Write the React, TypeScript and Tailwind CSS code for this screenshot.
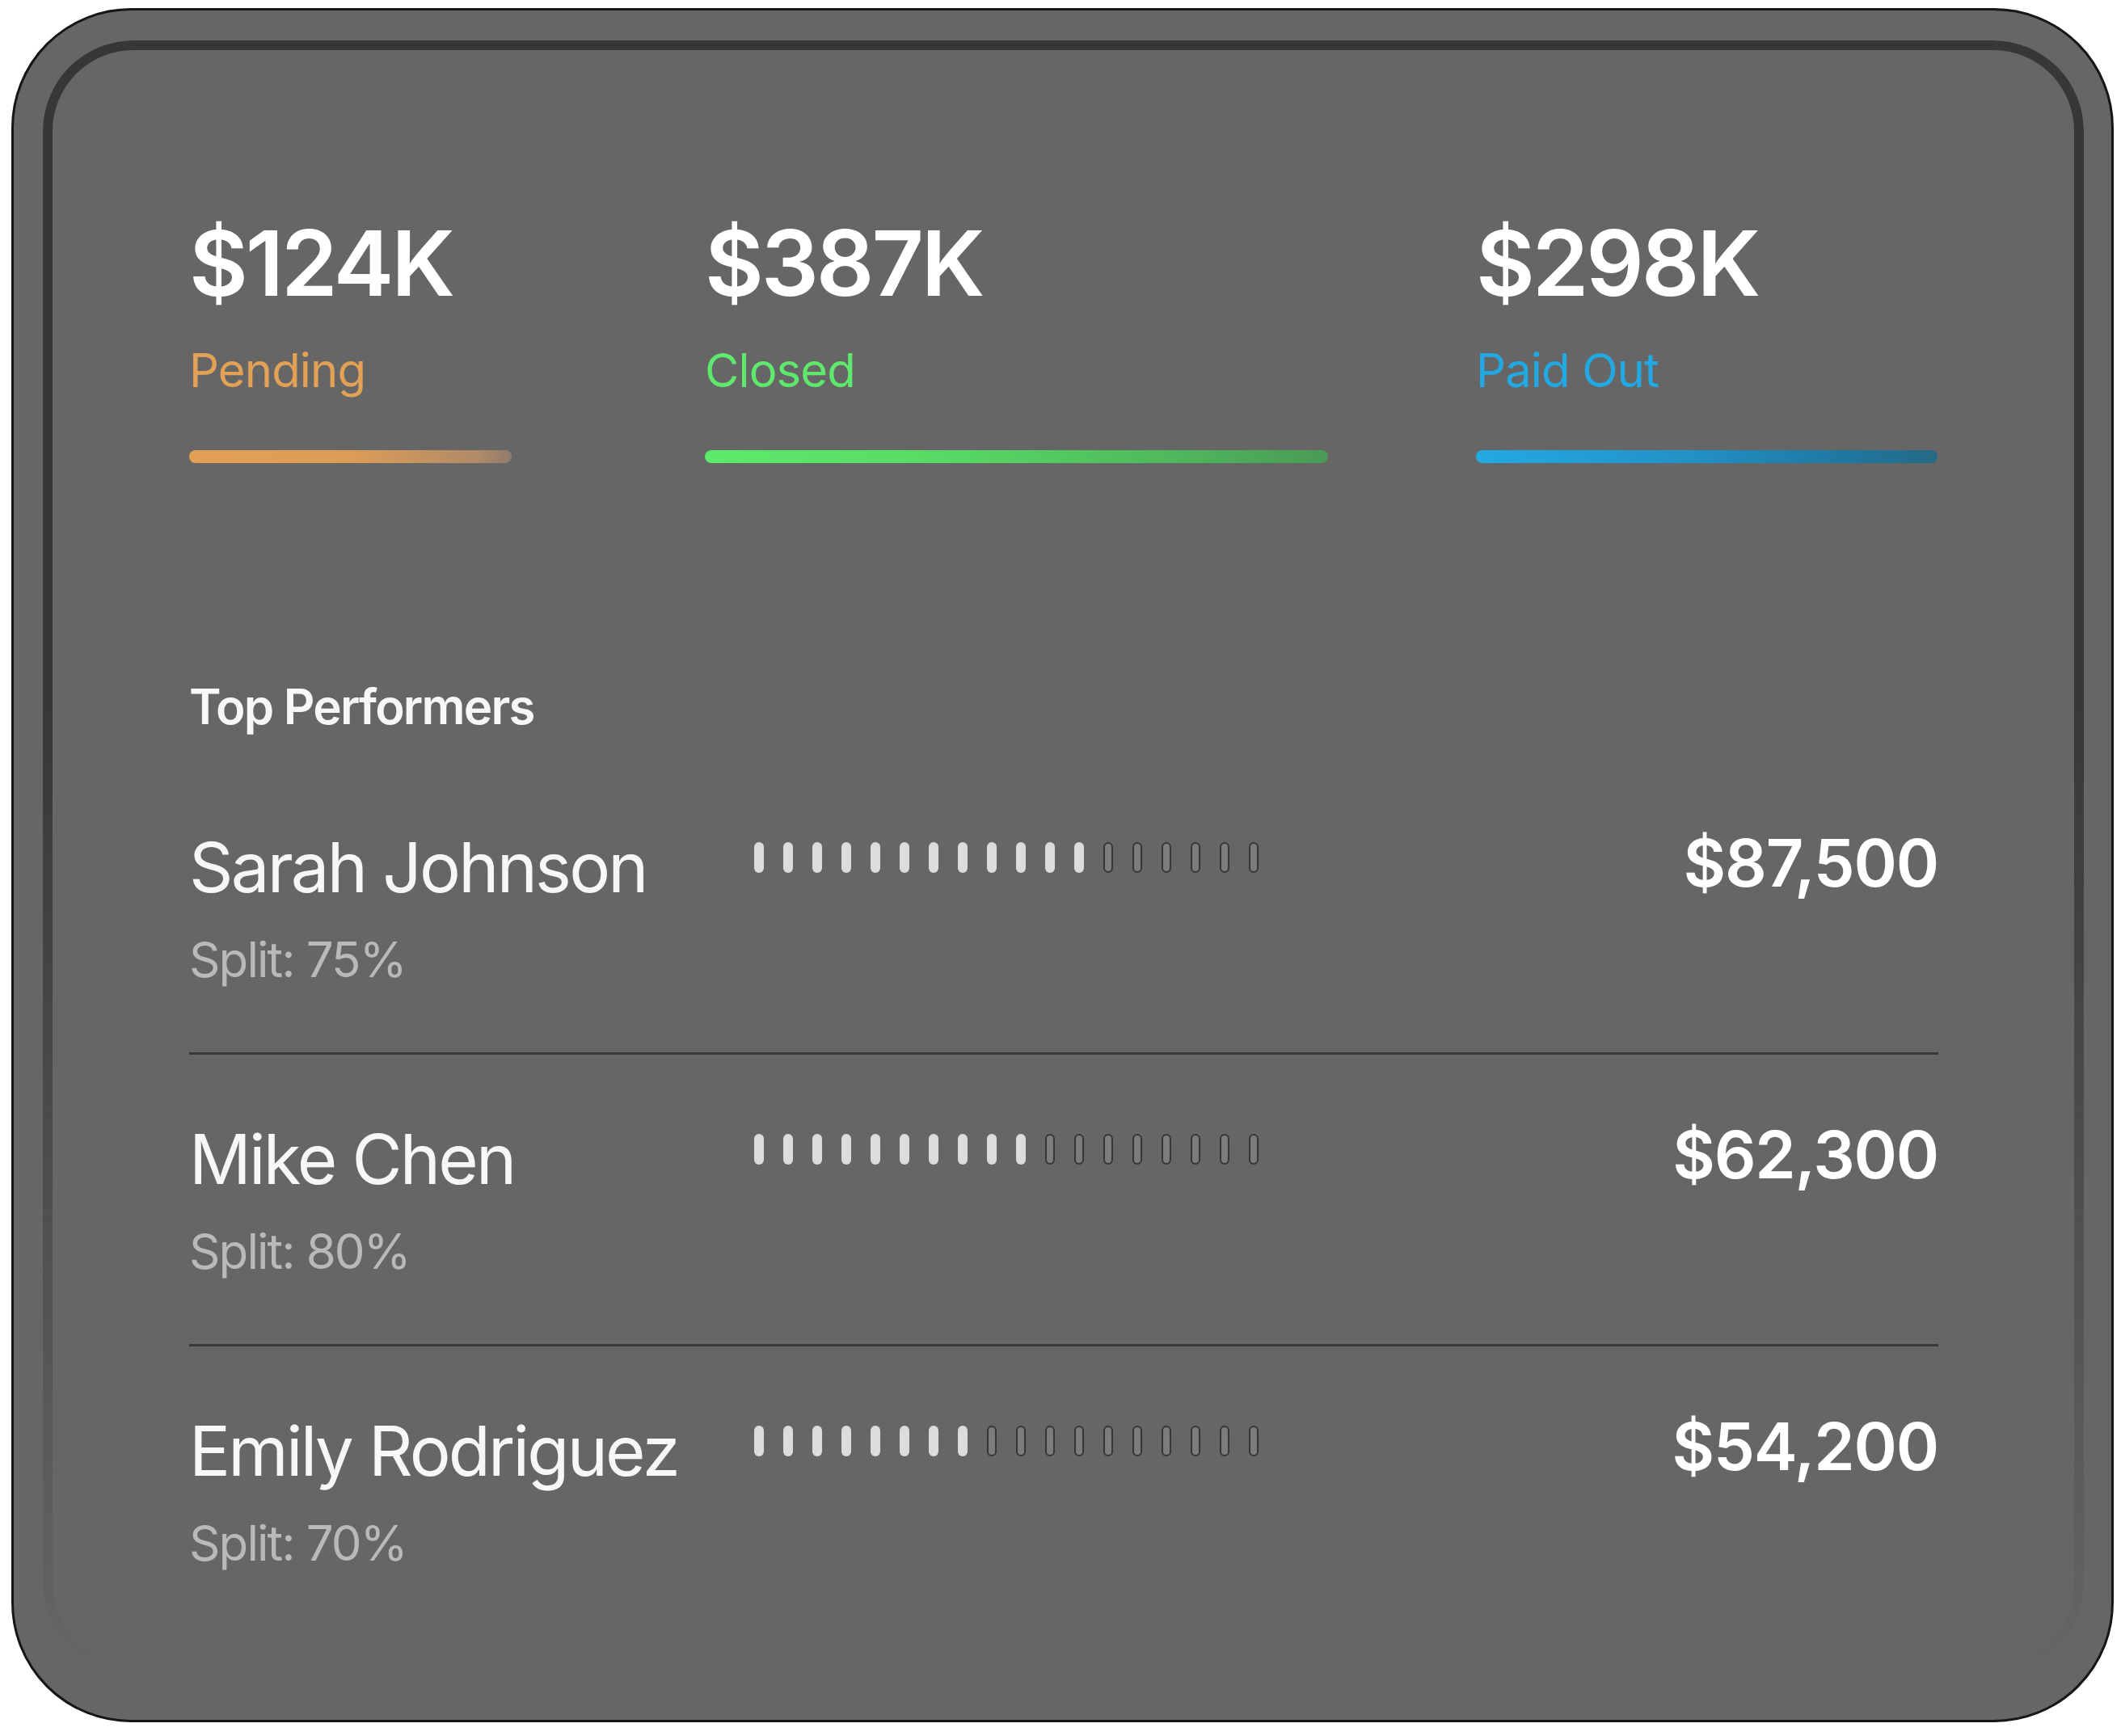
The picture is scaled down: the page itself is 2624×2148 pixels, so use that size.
import React from "react";

interface Stat {
  value: string;
  label: string;
  labelClass: string;
  barClass: string;
  colClass: string;
}

interface Performer {
  name: string;
  split: string;
  amount: string;
  filled: number;
}

const stats: Stat[] = [
  {
    value: "$124K",
    label: "Pending",
    labelClass: "text-[#e3a156]",
    barClass:
      "w-[399px] bg-[linear-gradient(to_right,#e2a055_0%,#dc9d57_50%,#b08a68_90%,#8e7b6d_100%)]",
    colClass: "w-[638px]",
  },
  {
    value: "$387K",
    label: "Closed",
    labelClass: "text-[#5fe96c]",
    barClass:
      "w-[771px] bg-[linear-gradient(to_right,#5de96b_0%,#58dc66_35%,#4fb85c_75%,#4a9a55_100%)]",
    colClass: "w-[954px]",
  },
  {
    value: "$298K",
    label: "Paid Out",
    labelClass: "text-[#22a9e3]",
    barClass:
      "w-full bg-[linear-gradient(to_right,#24a9e2_0%,#2292c7_45%,#1f77a0_80%,#256a86_100%)]",
    colClass: "w-[571px]",
  },
];

const performers: Performer[] = [
  { name: "Sarah Johnson", split: "Split: 75%", amount: "$87,500", filled: 12 },
  { name: "Mike Chen", split: "Split: 80%", amount: "$62,300", filled: 10 },
  { name: "Emily Rodriguez", split: "Split: 70%", amount: "$54,200", filled: 8 },
];

const TOTAL_TICKS = 18;

function Ticks({ filled }: { filled: number }) {
  return (
    <div className="mt-[18px] flex gap-[24px]">
      {Array.from({ length: TOTAL_TICKS }).map((_, i) =>
        i < filled ? (
          <div key={i} className="h-[38px] w-[12px] rounded-full bg-[#dcdcdc]" />
        ) : (
          <div
            key={i}
            className="h-[38px] w-[12px] rounded-full border-2 border-[#363636] bg-[#7c7c7c]"
          />
        )
      )}
    </div>
  );
}

export default function App() {
  return (
    <div
      className="min-h-screen bg-white pl-[14px] pt-[10px]"
      style={{ fontFamily: "Inter, 'Liberation Sans', sans-serif" }}
    >
      <div className="relative h-[2121px] w-[2601px] overflow-hidden rounded-[148px] border-[3px] border-[#161616] bg-[#666666]">
        {/* fading inner frame */}
        <div className="pointer-events-none absolute bottom-[57px] left-[36px] right-[34px] top-[37px] rounded-[112px] border-[12px] border-[#373737] [mask-image:linear-gradient(to_bottom,#000_0%,#000_40%,transparent_100%)]" />

        <div className="relative pl-[217px] pr-[214px] pt-[256px]">
          {/* STATS */}
          <div className="flex">
            {stats.map((s) => (
              <div key={s.label} className={s.colClass}>
                <div className="text-[112px] font-semibold leading-none tracking-[-0.028em] text-white">
                  {s.value}
                </div>
                <div className={`mt-[48px] text-[58px] leading-none tracking-[-0.015em] ${s.labelClass}`}>
                  {s.label}
                </div>
                <div className={`mt-[70px] h-[16px] rounded-full ${s.barClass}`} />
              </div>
            ))}
          </div>

          {/* TOP PERFORMERS */}
          <div className="mt-[271px] mb-[40px] text-[60px] font-semibold leading-none tracking-[-0.03em] text-[#f7f7f7]">
            Top Performers
          </div>

          <div>
            {performers.map((p, i) => (
              <div
                key={p.name}
                className={
                  i < performers.length - 1
                    ? "flex items-start border-b-[3px] border-[#393939] pt-[80px] pb-[79px]"
                    : "flex items-start pt-[80px] pb-[79px]"
                }
              >
                <div className="w-[699px]">
                  <div className="text-[85px] leading-[100px] tracking-[-0.033em] text-[#f7f7f7]">
                    {p.name}
                  </div>
                  <div className="mt-[27px] text-[60px] leading-[72px] tracking-[-0.032em] text-[#b9b9b9]">
                    {p.split}
                  </div>
                </div>
                <Ticks filled={p.filled} />
                <div className="ml-auto text-[81px] font-semibold leading-[89px] tracking-[-0.015em] text-white">
                  {p.amount}
                </div>
              </div>
            ))}
          </div>
        </div>
      </div>
    </div>
  );
}
